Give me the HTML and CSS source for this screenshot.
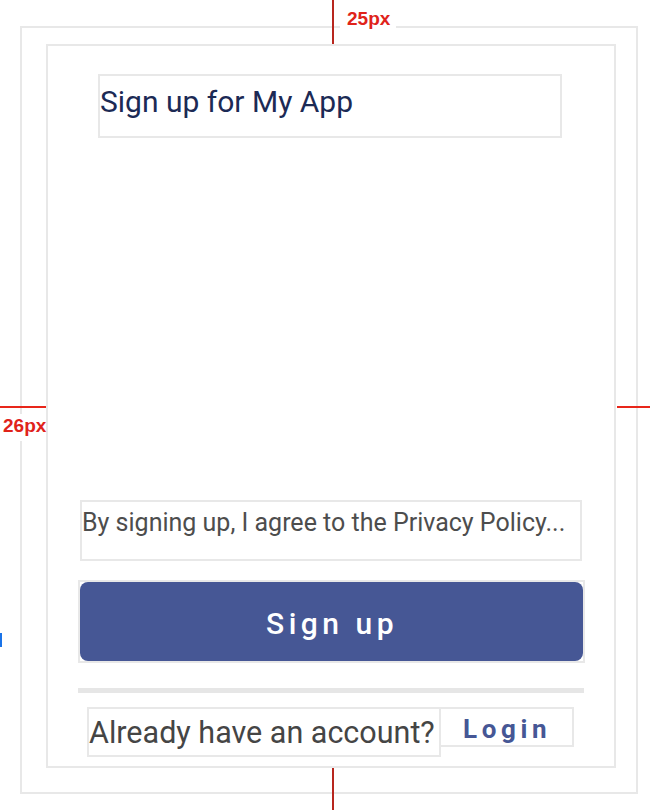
FILE: index.html
```html
<!DOCTYPE html>
<html lang="en">
<head>
<meta charset="utf-8">
<title>Sign up for My App</title>
<link rel="stylesheet" href="styles.css">
</head>
<body>
  <div class="frame">
    <div class="screen">
      <div class="title-box"><h1 class="title">Sign up for My App</h1></div>
      <div class="policy-box"><p class="policy">By signing up, I agree to the Privacy Policy...</p></div>
      <div class="btn-wrap"><button class="btn-signup">Sign up</button></div>
      <div class="divider"></div>
      <div class="login-row">
        <div class="already-box"><span class="already">Already have an account?</span></div>
        <div class="login-box"><span class="login">Login</span></div>
      </div>
    </div>
  </div>

  <div class="guide guide-v guide-top"></div>
  <div class="guide guide-v guide-bottom"></div>
  <div class="guide guide-h guide-left"></div>
  <div class="guide guide-h guide-right"></div>
  <div class="guide-label label-top">25px</div>
  <div class="guide-label label-left">26px</div>
  <div class="blue-mark"></div>
</body>
</html>
```

FILE: styles.css
```css
* { box-sizing: border-box; }

html, body {
  margin: 0;
  padding: 0;
  background: #ffffff;
}

body {
  width: 650px;
  height: 810px;
  overflow: hidden;
  font-family: Roboto, "Liberation Sans", sans-serif;
}

.frame {
  margin: 26px 0 0 20px;
  width: 618px;
  height: 768px;
  border: 2px solid #e8e8e8;
  padding: 16px 20px 24px 24px;
}

.screen {
  width: 570px;
  height: 724px;
  border: 2px solid #e8e8e8;
  padding-bottom: 9px;
  display: flex;
  flex-direction: column;
  align-items: flex-start;
}

.title-box {
  margin: 28px 0 0 50px;
  width: 464px;
  height: 64px;
  border: 2px solid #e8e8e8;
  padding-top: 8px;
}

.title {
  margin: 0;
  font-size: 30px;
  font-weight: 400;
  line-height: 35px;
  color: #1c2a55;
}

.policy-box {
  margin: auto 0 0 32px;
  width: 502px;
  height: 61px;
  border: 2px solid #e8e8e8;
  padding-top: 6px;
}

.policy {
  margin: 0;
  font-size: 25px;
  line-height: 29px;
  color: #4d4d4d;
  white-space: nowrap;
}

.btn-wrap {
  margin: 19px 0 0 30px;
  width: 507px;
  height: 83px;
  border: 2px solid #e8e8e8;
}

.btn-signup {
  display: flex;
  align-items: center;
  justify-content: center;
  width: 100%;
  height: 100%;
  border: none;
  border-radius: 8px;
  background: #465795;
  color: #ffffff;
  font-family: Roboto, "Liberation Sans", sans-serif;
  font-size: 30px;
  font-weight: 500;
  letter-spacing: 4.5px;
  padding: 3px 0 0 1px;
}

.divider {
  margin: 25px 0 0 30px;
  width: 506px;
  height: 5px;
  background: #e6e6e6;
}

.login-row {
  margin: 14px 0 0 39px;
  display: flex;
  align-items: flex-start;
}

.already-box {
  width: 354px;
  height: 50px;
  border: 2px solid #e8e8e8;
  padding-top: 6px;
}

.already {
  font-size: 30.5px;
  line-height: 36px;
  color: #454545;
  white-space: nowrap;
}

.login-box {
  margin-left: -2px;
  width: 135px;
  height: 40px;
  border: 2px solid #e8e8e8;
  padding: 5px 0 0 22px;
}

.login {
  font-size: 26px;
  line-height: 30px;
  font-weight: 700;
  letter-spacing: 4.6px;
  color: #465795;
}

/* measurement overlay */
.guide {
  position: absolute;
}

.guide-v {
  left: 332px;
  width: 2px;
  background: #b8261e;
}

.guide-top { top: 0; height: 44px; }
.guide-bottom { top: 768px; height: 42px; }

.guide-h {
  top: 406px;
  height: 2px;
  background: #e8261a;
}

.guide-left { left: 0; width: 46px; }
.guide-right { left: 617px; width: 33px; }

.guide-label {
  position: absolute;
  background: #ffffff;
  color: #e0231a;
  font-family: "Liberation Sans", Arial, sans-serif;
  font-weight: 700;
  font-size: 19px;
  line-height: 22px;
}

.label-top {
  left: 340px;
  top: 8px;
  padding: 0 6px 6px 7px;
}

.label-left {
  left: 0;
  top: 414px;
  padding: 1px 0 4px 3px;
}

.blue-mark {
  position: absolute;
  left: 0;
  top: 633px;
  width: 2px;
  height: 14px;
  background: #1a73e8;
}
```
